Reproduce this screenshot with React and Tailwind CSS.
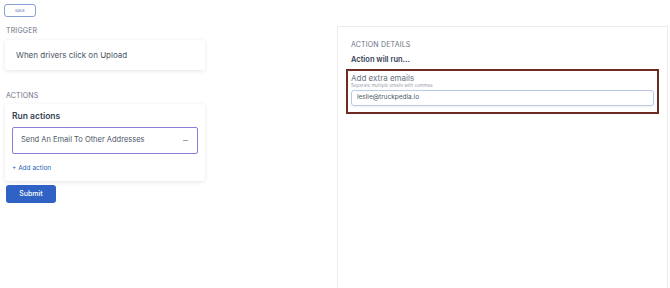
const App = () => {
    return (
        <div className="w-[670px] h-[288px] bg-white flex font-['Inter',sans-serif] text-gray-700 overflow-hidden">
            {/* Left column */}
            <div className="w-[337px] flex flex-col pl-[4px] pt-[4px]">
                <button className="w-[32px] h-[13px] border border-[#8aa0d0] rounded-[3px] text-[4px] text-[#6b7fb0] leading-none">
                    Back
                </button>

                <div className="mt-[10px] ml-[2px] text-[7px] text-gray-500 tracking-wide leading-none">TRIGGER</div>
                <div className="mt-[6px] ml-[1px] w-[200px] h-[30px] rounded-[3px] bg-white shadow-[0_1px_4px_rgba(0,0,0,0.1)] flex items-center pl-[11px] text-[8px] text-gray-600">
                    When drivers click on Upload
                </div>

                <div className="mt-[22px] ml-[2px] text-[7px] text-gray-500 tracking-wide leading-none">ACTIONS</div>
                <div className="mt-[5px] ml-[1px] w-[200px] h-[77px] rounded-[3px] bg-white shadow-[0_1px_4px_rgba(0,0,0,0.1)] flex flex-col px-[7px] pt-[8px]">
                    <div className="text-[8.5px] font-semibold text-gray-700 leading-none">Run actions</div>
                    <div className="mt-[6px] h-[27px] border border-[#8c7fdc] rounded-[2px] flex items-center justify-between pl-[8px] pr-[9px]">
                        <span className="text-[7.5px] text-gray-600">Send An Email To Other Addresses</span>
                        <span className="w-[5px] h-px bg-gray-400" />
                    </div>
                    <div className="mt-[11px] text-[6.5px] text-[#2b5fb8] leading-none">+ Add action</div>
                </div>

                <button className="mt-[4px] ml-[2px] w-[50px] h-[18px] rounded-[3px] bg-[#2f62c4] text-white text-[7px] font-medium">
                    Submit
                </button>
            </div>

            {/* Right panel */}
            <div className="w-[331px] mt-[26px] border border-[#ececec] border-b-0 flex flex-col px-[8px] pt-[14px]">
                <div className="ml-[5px] text-[7px] text-gray-500 tracking-wide leading-none">ACTION DETAILS</div>
                <div className="ml-[5px] mt-[8px] text-[7.5px] font-semibold text-gray-700 leading-none">Action will run...</div>
                <div className="mt-[5px] border-2 border-[#6e2b22] flex flex-col px-[3px] pt-[3px] pb-[6px]">
                    <div className="text-[8px] text-gray-500 leading-none">Add extra emails</div>
                    <div className="mt-[2px] text-[4.5px] text-gray-400 leading-none">Separate multiple emails with commas</div>
                    <div className="mt-[2px] h-[16px] border border-[#b9c9e6] rounded-[3px] flex items-center pl-[5px] text-[6.5px] text-gray-600 shadow-[0_1px_2px_rgba(0,0,0,0.06)]">
                        leslie@truckpedia.io
                    </div>
                </div>
            </div>
        </div>
    );
};

export default App;
